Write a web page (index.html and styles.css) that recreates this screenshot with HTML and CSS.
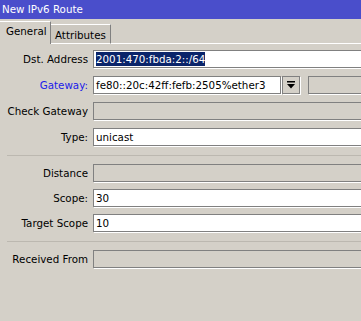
FILE: index.html
```html
<!DOCTYPE html>
<html>
	<head>
		<meta charset="UTF-8">
		<title>New IPv6 Route</title>
		<link rel="stylesheet" href="styles.css">
	</head>
	<body>
		<div id="win">
			<div class="title">New IPv6 Route</div>
			<div class="tabs">
				<div class="tab active">General</div>
				<div class="tab">Attributes</div>
				<div class="tab-fill"></div>
			</div>
			<div class="form">
				<div class="group">
					<div class="row">
						<label class="lbl">Dst. Address</label>
						<div class="field"><span class="sel">2001:470:fbda:2::/64</span></div>
					</div>
					<div class="row">
						<label class="lbl link">Gateway:</label>
						<div class="field short">fe80::20c:42ff:fefb:2505%ether3</div>
						<div class="drop">
							<svg width="8" height="8" viewBox="0 0 8 8"><rect x="0" y="0" width="8" height="1.5" fill="#000"/><polygon points="0,3 8,3 4,7.5" fill="#000"/></svg>
						</div>
						<div class="field off extra"></div>
					</div>
					<div class="row">
						<label class="lbl">Check Gateway</label>
						<div class="field off"></div>
					</div>
					<div class="row">
						<label class="lbl">Type:</label>
						<div class="field">unicast</div>
					</div>
				</div>
				<div class="sep"></div>
				<div class="group tight">
					<div class="row">
						<label class="lbl">Distance</label>
						<div class="field off"></div>
					</div>
					<div class="row">
						<label class="lbl">Scope:</label>
						<div class="field">30</div>
					</div>
					<div class="row">
						<label class="lbl">Target Scope</label>
						<div class="field">10</div>
					</div>
				</div>
				<div class="sep"></div>
				<div class="group">
					<div class="row">
						<label class="lbl">Received From</label>
						<div class="field off"></div>
					</div>
				</div>
			</div>
		</div>
	</body>
</html>
```

FILE: styles.css
```css
html, body {
	margin: 0;
	padding: 0;
	overflow: hidden;
}
body {
	background: #d4d0c8;
	font-family: "DejaVu Sans", sans-serif;
	font-size: 10.3px;
	color: #000;
}
#win {
	width: 420px;
	height: 321px;
	background: #d4d0c8;
}
.title {
	height: 19px;
	line-height: 19px;
	background: #4a4ecb;
	color: #fff;
	padding-left: 2px;
}
.tabs {
	display: flex;
	align-items: flex-end;
	height: 25px;
}
.tab {
	box-sizing: border-box;
	height: 20px;
	line-height: 20px;
	padding: 0 4px;
	border-top: 1px solid #fff;
	border-right: 1px solid #808080;
	border-bottom: 1px solid #fff;
	background: #ccc8c0;
}
.tab.active {
	height: 23px;
	line-height: 19px;
	padding: 0 6px 0 6px;
	width: 51px;
	border-bottom: none;
	background: #d4d0c8;
}
.tab-fill {
	flex: 1;
	border-bottom: 1px solid #fff;
}
.form {
	padding-top: 6px;
}
.group {
	display: flex;
	flex-direction: column;
	gap: 8px;
}
.group.tight {
	gap: 7px;
}
.row {
	display: flex;
	align-items: center;
	height: 18px;
}
.lbl {
	width: 81px;
	margin-left: 7px;
	margin-right: 5px;
	text-align: right;
	white-space: nowrap;
	overflow: hidden;
	flex-shrink: 0;
}
.lbl.link {
	color: #2020e8;
}
.field {
	box-sizing: border-box;
	flex: 1;
	height: 18px;
	line-height: 16px;
	padding-left: 2px;
	background: #fff;
	border: 1px solid #808080;
	box-shadow: 1px 1px 0 #fff;
	white-space: nowrap;
}
.field.short {
	flex: 0 0 188px;
}
.field.off {
	background: #d4d0c8;
}
.field.extra {
	margin-left: 8px;
}
.sel {
	background: #0a246a;
	color: #fff;
	padding: 1px 0;
}
.drop {
	box-sizing: border-box;
	width: 18px;
	height: 18px;
	margin-left: 1px;
	border: 1px solid #808080;
	box-shadow: 1px 1px 0 #fff;
	display: flex;
	align-items: center;
	justify-content: center;
}
.sep {
	height: 1px;
	background: #bcb8b0;
	margin: 9px 0 8px 7px;
}
```
